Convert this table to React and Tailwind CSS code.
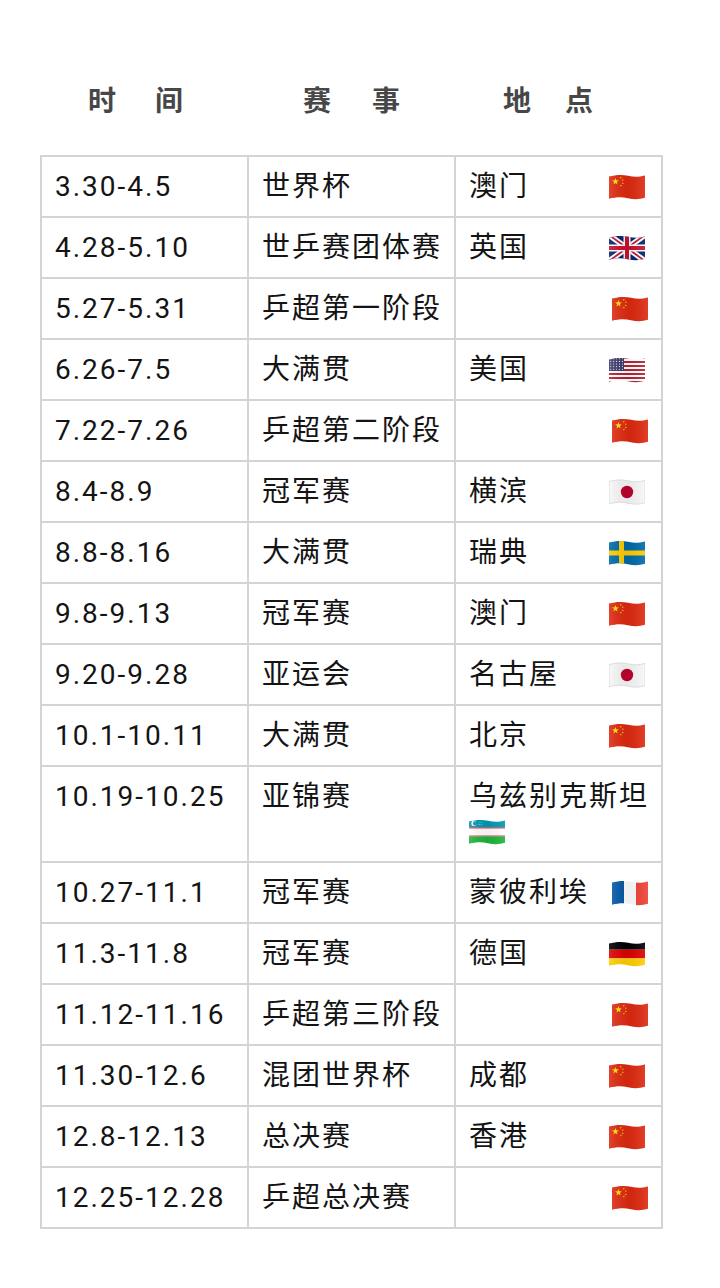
import React from 'react'

const rows = [
  ['3.30-4.5', '世界杯', '澳门', 'cn'],
  ['4.28-5.10', '世乒赛团体赛', '英国', 'gb'],
  ['5.27-5.31', '乒超第一阶段', '', 'cn'],
  ['6.26-7.5', '大满贯', '美国', 'us'],
  ['7.22-7.26', '乒超第二阶段', '', 'cn'],
  ['8.4-8.9', '冠军赛', '横滨', 'jp'],
  ['8.8-8.16', '大满贯', '瑞典', 'se'],
  ['9.8-9.13', '冠军赛', '澳门', 'cn'],
  ['9.20-9.28', '亚运会', '名古屋', 'jp'],
  ['10.1-10.11', '大满贯', '北京', 'cn'],
  ['10.19-10.25', '亚锦赛', '乌兹别克斯坦', 'uz'],
  ['10.27-11.1', '冠军赛', '蒙彼利埃', 'fr'],
  ['11.3-11.8', '冠军赛', '德国', 'de'],
  ['11.12-11.16', '乒超第三阶段', '', 'cn'],
  ['11.30-12.6', '混团世界杯', '成都', 'cn'],
  ['12.8-12.13', '总决赛', '香港', 'cn'],
  ['12.25-12.28', '乒超总决赛', '', 'cn'],
]

// five-point star as polygon points
function star(cx, cy, r, rot = 0) {
  const pts = []
  for (let i = 0; i < 10; i++) {
    const rr = i % 2 === 0 ? r : r * 0.4
    const a = (Math.PI / 5) * i - Math.PI / 2 + rot
    pts.push(`${(cx + rr * Math.cos(a)).toFixed(2)},${(cy + rr * Math.sin(a)).toFixed(2)}`)
  }
  return pts.join(' ')
}

const WAVE = 'M0 2.6 C7 0.6 13 0.4 19 1.8 C25 3.2 30 3.2 36 1.4 L36 23.8 C30 25.6 25 25.6 19 24.2 C13 22.8 7 22.9 0 24.8 Z'

function FlagArt({ code }) {
  switch (code) {
    case 'cn':
      return (
        <>
          <rect width="36" height="26" fill="#de2910" />
          <polygon points={star(6.5, 7.5, 3.6)} fill="#ffde00" />
          <polygon points={star(11.8, 3.8, 1.1, 0.4)} fill="#ffde00" />
          <polygon points={star(13.8, 6.2, 1.1, 0.8)} fill="#ffde00" />
          <polygon points={star(13.8, 9.4, 1.1)} fill="#ffde00" />
          <polygon points={star(11.8, 11.6, 1.1, 0.4)} fill="#ffde00" />
        </>
      )
    case 'gb':
      return (
        <>
          <rect width="36" height="26" fill="#012169" />
          <path d="M0 0 L36 26 M36 0 L0 26" stroke="#fff" strokeWidth="5.5" />
          <path d="M0 0 L36 26 M36 0 L0 26" stroke="#c8102e" strokeWidth="1.8" />
          <path d="M18 0 V26 M0 13 H36" stroke="#fff" strokeWidth="7" />
          <path d="M18 0 V26 M0 13 H36" stroke="#c8102e" strokeWidth="4" />
        </>
      )
    case 'us':
      return (
        <>
          <rect width="36" height="26" fill="#fff" />
          {[0, 2, 4, 6, 8, 10, 12].map(i => (
            <rect key={i} y={i * 2} width="36" height="2" fill="#b22234" />
          ))}
          <rect width="15" height="14" fill="#3c3b6e" />
          {[0, 1, 2, 3, 4].map(r =>
            [0, 1, 2, 3, 4].map(c => (
              <circle key={`${r}-${c}`} cx={1.8 + c * 2.9} cy={1.8 + r * 2.6} r="0.55" fill="#fff" />
            ))
          )}
        </>
      )
    case 'jp':
      return (
        <>
          <rect width="36" height="26" fill="#f8f8f8" />
          <circle cx="18" cy="13" r="6.2" fill="#bc002d" />
        </>
      )
    case 'se':
      return (
        <>
          <rect width="36" height="26" fill="#006aa7" />
          <rect x="10" width="5" height="26" fill="#fecc00" />
          <rect y="10.5" width="36" height="5" fill="#fecc00" />
        </>
      )
    case 'uz':
      return (
        <>
          <rect width="36" height="26" fill="#fff" />
          <rect width="36" height="8.5" fill="#0099b5" />
          <rect y="8.5" width="36" height="0.9" fill="#ce1126" />
          <rect y="16.6" width="36" height="0.9" fill="#ce1126" />
          <rect y="17.5" width="36" height="8.5" fill="#1eb53a" />
          <circle cx="5" cy="4.4" r="2.6" fill="#fff" />
          <circle cx="6.1" cy="4.4" r="2.2" fill="#0099b5" />
          {[0, 1, 2].map(i => (
            <circle key={i} cx={9 + i * 1.8} cy="5.6" r="0.45" fill="#fff" />
          ))}
          {[0, 1].map(i => (
            <circle key={i} cx={10.8 + i * 1.8} cy="3.6" r="0.45" fill="#fff" />
          ))}
        </>
      )
    case 'fr':
      return (
        <>
          <rect width="12" height="26" fill="#0055a4" />
          <rect x="12" width="12" height="26" fill="#fff" />
          <rect x="24" width="12" height="26" fill="#ef4135" />
        </>
      )
    case 'de':
      return (
        <>
          <rect width="36" height="8.7" fill="#000" />
          <rect y="8.7" width="36" height="8.7" fill="#dd0000" />
          <rect y="17.4" width="36" height="8.6" fill="#ffce00" />
        </>
      )
    default:
      return null
  }
}

function Flag({ code }) {
  const id = `clip-${code}`
  return (
    <svg width="36" height="26" viewBox="0 0 36 26" className="shrink-0 block">
      <defs>
        <clipPath id={id}>
          <path d={WAVE} />
        </clipPath>
        <linearGradient id={`shade-${code}`} x1="0" x2="1" y1="0" y2="0">
          <stop offset="0" stopColor="#fff" stopOpacity="0.12" />
          <stop offset="0.5" stopColor="#000" stopOpacity="0.06" />
          <stop offset="1" stopColor="#fff" stopOpacity="0.1" />
        </linearGradient>
      </defs>
      <g clipPath={`url(#${id})`}>
        <FlagArt code={code} />
        <rect width="36" height="26" fill={`url(#shade-${code})`} />
      </g>
      {code === 'jp' && <path d={WAVE} fill="none" stroke="#d6d6d6" strokeWidth="0.8" />}
    </svg>
  )
}

const cell = 'border-r-2 border-b-2 border-[#d4d4d4] pl-[13px] py-3 leading-[35px]'

export default function App() {
  return (
    <div className="min-h-screen bg-white text-[#141414] font-[Roboto,'Noto_Sans_CJK_SC',sans-serif]">
      <div className="pt-[84px] pl-[40px]">

        {/* header */}
        <div className="grid grid-cols-[2px_207px_207px_209px] text-[28px] leading-[35px] font-bold text-[#474747]">
          <div />
          <div className="flex justify-center gap-[39px] pr-[20px]">
            <span>时</span><span>间</span>
          </div>
          <div className="flex justify-center gap-[41px] pr-[2px]">
            <span>赛</span><span>事</span>
          </div>
          <div className="flex justify-center gap-[34px] pr-[25px]">
            <span>地</span><span>点</span>
          </div>
        </div>

        {/* table */}
        <div className="mt-[36px] w-[623px] border-l-2 border-t-2 border-[#d4d4d4] grid grid-cols-[207px_207px_207px] text-[28px] tracking-[2px]">
          {rows.map(([date, name, place, flag]) => {
            const pr = flag === 'uz' ? 'pr-[8px]' : (!place || flag === 'fr') ? 'pr-[13px]' : 'pr-[16px]'
            return (
              <React.Fragment key={date}>
                <div className={cell}>{date}</div>
                <div className={cell}>{name}</div>
                <div className={`${cell} ${pr} flex flex-wrap items-center justify-between`}>
                  {place ? <span>{place}</span> : <span />}
                  <span className="h-[35px] flex items-center">
                    <Flag code={flag} />
                  </span>
                </div>
              </React.Fragment>
            )
          })}
        </div>

      </div>
    </div>
  )
}
